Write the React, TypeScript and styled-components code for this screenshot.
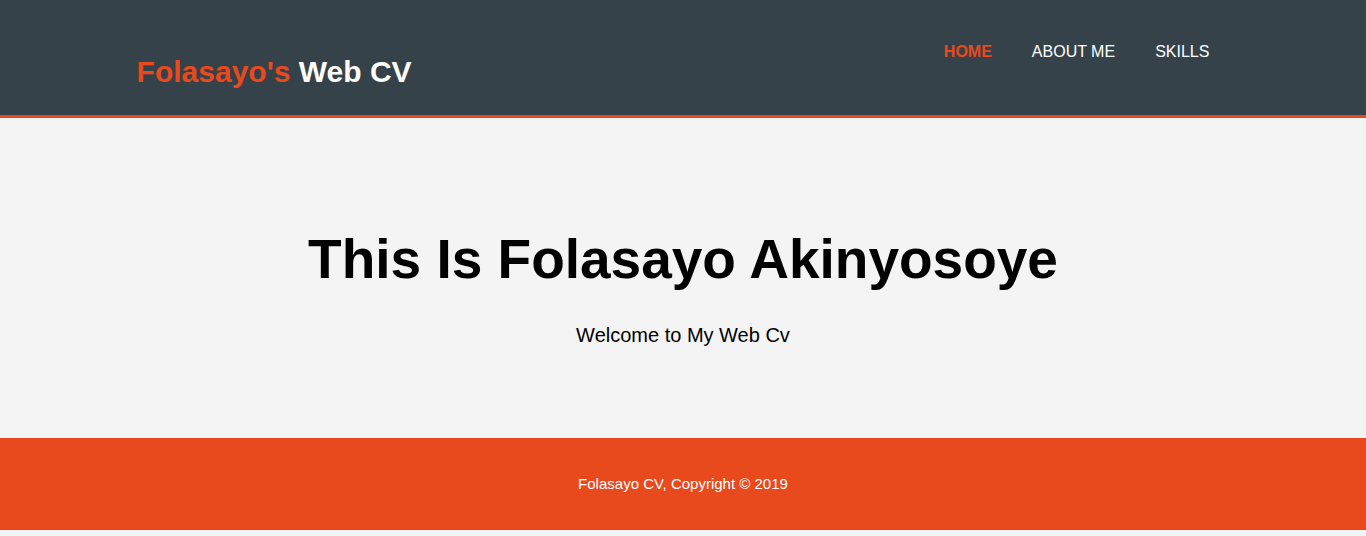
import React from "react";
import styled, { createGlobalStyle } from "styled-components";

type TNavLinkProps = {
  current?: boolean;
}

const GlobalStyle = createGlobalStyle`
  body {
    margin: 0;
    padding: 0;
    font-family: "Liberation Sans", Arial, Helvetica, sans-serif;
    font-size: 15px;
    line-height: 1.5;
    background-color: #f4f4f4;
  }
`

const Container = styled.div`
  width: 80%;
  margin: auto;
  overflow: hidden;
`;

const Header = styled.header`
  background: #35424a;
  color: #ffffff;
  height: 115px;
  border-bottom: #e8491d 3px solid;
  box-sizing: content-box;
`;

const HeaderInner = styled(Container)`
  display: flex;
  justify-content: space-between;
  align-items: flex-start;
`;

const Branding = styled.h1`
  margin: 46px 0 0 0;
  font-size: 30px;
  line-height: 51px;
`;

const Highlight = styled.span`
  color: #e8491d;
`;

const Nav = styled.ul`
  display: flex;
  list-style: none;
  margin: 40px 0 0 0;
  padding: 0;
`;

const NavItem = styled.li`
  padding: 0 20px;
`;

const NavLink = styled.a<TNavLinkProps>`
  color: ${props => props.current ? "#e8491d" : "#ffffff"};
  font-weight: ${props => props.current ? "bold" : "normal"};
  text-decoration: none;
  text-transform: uppercase;
  font-size: 16px;
  line-height: 24px;
`;

const Showcase = styled.section`
  height: 320px;
  text-align: center;
  color: #000;
  display: flex;
  flex-direction: column;
  align-items: center;
`;

const Title = styled.h1`
  margin: 109px 0 0 0;
  font-size: 55px;
  line-height: 64px;
`;

const Subtitle = styled.p`
  margin: 30px 0 0 0;
  font-size: 20px;
  line-height: 28px;
`;

const Footer = styled.footer`
  height: 92px;
  color: #ffffff;
  background-color: #e8491d;
  text-align: center;
  display: flex;
  align-items: center;
  justify-content: center;
`;

const FooterText = styled.p`
  margin: 0;
  font-size: 15px;
`;

const App = () => {
  return (
    <>
      <GlobalStyle />
      <Header>
        <HeaderInner>
          <Branding><Highlight>Folasayo's</Highlight> Web CV</Branding>
          <nav>
            <Nav>
              <NavItem><NavLink href="#" current>Home</NavLink></NavItem>
              <NavItem><NavLink href="#">About Me</NavLink></NavItem>
              <NavItem><NavLink href="#">Skills</NavLink></NavItem>
            </Nav>
          </nav>
        </HeaderInner>
      </Header>
      <Showcase>
        <Title>This Is Folasayo Akinyosoye</Title>
        <Subtitle>Welcome to My Web Cv</Subtitle>
      </Showcase>
      <Footer>
        <FooterText>Folasayo CV, Copyright © 2019</FooterText>
      </Footer>
    </>
  );
}

export default App;
